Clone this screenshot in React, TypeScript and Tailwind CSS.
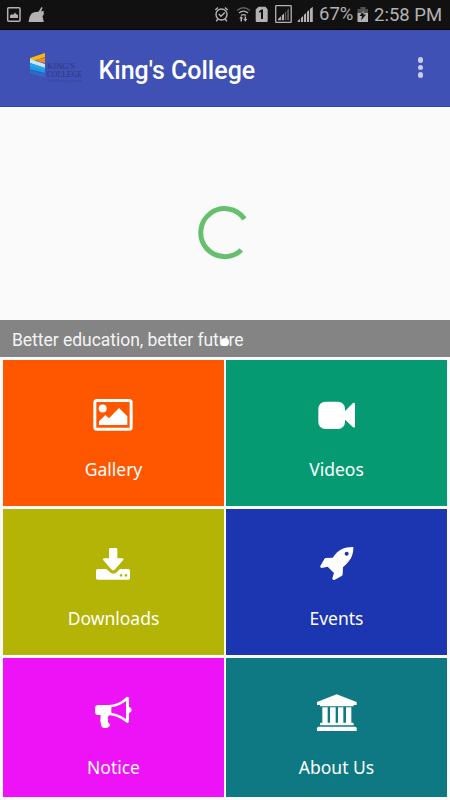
import React from 'react';

interface Tile {
  label: string;
  color: string;
  viewBox: string;
  icon: React.ReactNode;
}

const tiles: Tile[] = [
  {
    label: 'Gallery',
    color: 'bg-[#ff5600]',
    viewBox: '90 33 144 144',
    icon: (
      <>
        <rect x="104.5" y="61.5" width="109" height="86" rx="6" fill="none" stroke="currentColor" strokeWidth="9" />
        <circle cx="128" cy="85.500" r="12" />
        <path d="M117 135V124L136 105L147 115L177 84L202 109V135Z" />
      </>
    ),
  },
  {
    label: 'Videos',
    color: 'bg-[#069a72]',
    viewBox: '69 33 144 144',
    icon: (
      <>
        <rect x="85" y="65" width="80" height="82" rx="21" />
        <path d="M163 95L189 69Q195 66 195 72V139Q195 145 189 142L163 117Z" />
      </>
    ),
  },
  {
    label: 'Downloads',
    color: 'bg-[#b3b405]',
    viewBox: '90 30 144 144',
    icon: (
      <>
        <path d="M151 54H168Q172 54 172 58V85H187Q193 86 189 91L164 119Q160 123 155 119L130 91Q127 86 132 85H147V58Q147 54 151 54Z" />
        <path
          fillRule="evenodd"
          d="M113 117H139L152 128Q160 133 168 128L180 117H205Q210 117 210 122V144Q210 149 205 149H113Q108 149 108 144V122Q108 117 113 117ZM183 132a4 4 0 1 0 .01 0ZM198 132a4 4 0 1 0 .01 0Z"
        />
      </>
    ),
  },
  {
    label: 'Events',
    color: 'bg-[#1b36b0]',
    viewBox: '69 30 144 144',
    icon: (
      <path
        fillRule="evenodd"
        d="M188 51Q191 51 190 55C190 78 180 94 159 112L158 133Q158 136 155 138L133 150Q126 151 127 145L132 129L113 110L95 114Q89 113 91 108L103 87Q105 84 108 84L128 83C145 59 162 51 188 51ZM170 65a6 6 0 1 0 .01 0Z"
      />
    ),
  },
  {
    label: 'Notice',
    color: 'bg-[#ee12f6]',
    viewBox: '90 27 144 144',
    icon: (
      <path
        fillRule="evenodd"
        d="M115 75H145C166 74 183 66 197 53Q200 50 203 50Q207 51 207 55V81Q215 83 215 90Q215 97 207 99V124Q207 128 203 129Q200 129 197 126C182 114 165 107 148 106Q140 112 145 119Q140 124 151 134Q146 145 134 144Q126 144 124 138Q119 122 122 105H115Q105 105 105 95V85Q105 75 115 75ZM154 82V98Q178 102 198 117V63Q178 79 154 82Z"
      />
    ),
  },
  {
    label: 'About Us',
    color: 'bg-[#0f7983]',
    viewBox: '69 27 144 144',
    icon: (
      <>
        <path d="M140 43L200 66V75H191V79H90V75H81V66Z" />
        <path d="M97 82H113V128H120V82H137V128H144V82H160V128H168V82H184V128H188Q191 128 191 131V136H90V131Q90 128 93 128H97Z" />
        <path d="M86 140H195Q200 140 200 145V153H81V145Q81 140 86 140Z" />
      </>
    ),
  },
];

const StatusBar: React.FC = () => (
  <div className="flex h-[30px] shrink-0 items-center border-b border-black bg-[#111111] text-[#b2b2b2]">
    {/* Notifications */}
    <svg className="h-[30px] w-[60px] shrink-0" viewBox="0 0 60 30" fill="currentColor">
      <rect x="7.700" y="7.700" width="12.300" height="13.500" rx="1" fill="none" stroke="currentColor" strokeWidth="1.500" />
      <path d="M10 18V15.500L12 14L13 15L15 12.500L16 14L18 15V18Z" />
      <path d="M28.500 22Q28.700 17 31.500 13.500Q34 11.500 38.500 11.700L41.500 7L42.700 7.800L41 11.500L43.700 10.800V15L42.500 16L43.800 22Z" />
    </svg>
    {/* System icons */}
    <svg className="ml-[153px] h-[30px] w-[103px] shrink-0" viewBox="213 0 103 30" fill="currentColor">
      <g fill="none" stroke="currentColor" strokeWidth="1.400">
        <circle cx="221.500" cy="14.500" r="5.500" />
        <path d="M218.800 14L221 16.200L224.800 12.500M215.300 10L218 7.500M225 7.500L227.700 10M217.800 19L216.300 21.300M225.300 19L226.800 21.300" />
        <path d="M237 10.500Q243.500 5 250 10.500" opacity=".5" />
        <path d="M239 13Q243.500 9.300 248 13M241 15.500Q243.500 13.700 246 15.500" />
      </g>
      <path d="M239.200 18.500L241.200 16L243.200 18.500H242V21.500H240.500V18.500ZM243.300 19L245.300 21.700L247.300 19H246.100V16.500H244.600V19Z" />
      <path
        fillRule="evenodd"
        d="M258.500 6.700H265.500L267.700 9.500V21Q267.700 22 266.700 22H256.700Q255.700 22 255.700 21V9.500ZM259 11.200V12.800L261 12V19H263V9.500H261.500Z"
      />
      <rect x="275.700" y="5.700" width="15.500" height="16.700" rx=".6" fill="none" stroke="currentColor" strokeWidth="1.300" />
      <path d="M278 20.200V19L281 16.300V20.200ZM281.800 20.200V15.500L284 13.500V20.200Z" />
      <path d="M284.800 20.200V12.500L286.300 11V20.200ZM287.200 20.200V10L289 8.500V20.200Z" opacity=".45" />
      <path d="M297.700 22V21L300 18.800V22ZM300.900 22V18L303 16V22ZM303.900 22V15L306 13V22ZM306.900 22V12L309 10V22ZM309.900 22V9L312.800 6.700V22Z" />
    </svg>
    <span className="ml-[3px] w-[35px] whitespace-nowrap text-[18.500px] leading-[29px]">67%</span>
    <svg className="ml-[2px] h-[30px] w-[14px] shrink-0" viewBox="356 0 14 30" fill="currentColor">
      <path d="M360.500 7H365.500V9H368V13H357.500V9H360.500Z" opacity=".4" />
      <path fillRule="evenodd" d="M357.500 13H368V22H357.500ZM363.700 10.500L359.500 16H362L361 20.500L366 14.500H363.300Z" />
    </svg>
    <span className="ml-[4px] mt-px whitespace-nowrap text-[18.500px] leading-[29px]">2:58 PM</span>
  </div>
);

const CollegeLogo: React.FC = () => (
  <svg className="ml-[29px] h-[34px] w-[56px]" viewBox="29 52 56 34">
    <path d="M30 59L45 54V58L34 62L30 61Z" fill="#f7b713" />
    <path d="M36 61L45 58.500V64L40 63Z" fill="#f28b22" />
    <path d="M30 60L45 65V69L30 64Z" fill="#c5e9fb" />
    <path d="M30 64L45 69V72L30 68Z" fill="#25a5ec" />
    <path d="M30 67.500L45 71.500V74L30 70.500Z" fill="#159be7" />
    <path d="M30 71.500L45 75V78L30 74.500Z" fill="#2d6dc5" />
    <g fill="#2e377b" className="font-['Liberation_Serif',serif]">
      <text x="47" y="69.500" fontSize="7.300" textLength="28" lengthAdjust="spacingAndGlyphs">KING'S</text>
      <text x="47" y="77.500" fontSize="7.300" textLength="35" lengthAdjust="spacingAndGlyphs">COLLEGE</text>
      <text x="47.500" y="83" fontSize="3.500" textLength="34" fontStyle="italic" opacity=".6">architecting future</text>
    </g>
  </svg>
);

const Header: React.FC = () => (
  <div className="flex h-[77px] shrink-0 items-center border-b border-[#2846b0] bg-[#3f51b5]">
    <CollegeLogo />
    <h1 className="ml-[13.500px] mt-[5px] whitespace-nowrap text-[25px] font-medium leading-[30px] text-white">
      King's College
    </h1>
    <div className="mb-[1px] ml-auto mr-[27px] flex flex-col gap-[2px]">
      <span className="size-[5.500px] rounded-full bg-[#c8cce9]" />
      <span className="size-[5.500px] rounded-full bg-[#c8cce9]" />
      <span className="size-[5.500px] rounded-full bg-[#c8cce9]" />
    </div>
  </div>
);

export default function App() {
  return (
    <div className="flex h-[800px] w-[450px] flex-col overflow-hidden bg-[#fafafa] font-['Roboto',sans-serif]">
      <StatusBar />
      <Header />

      {/* Slider, still loading */}
      <div className="flex h-[213px] shrink-0 items-center justify-center pt-[38px]">
        <svg className="h-[54px] w-[54px]" viewBox="198 206 54 54">
          <path d="M244.500 219A24 24 0 1 0 241.300 250" fill="none" stroke="#66bf6c" strokeWidth="5" />
        </svg>
      </div>
      <div className="relative flex h-[37px] shrink-0 items-center bg-[#848484] pl-[12px]">
        <span className="mt-[2px] whitespace-nowrap text-[17.500px] leading-6 tracking-[-0.03px] text-[#f4f4f4]">
          Better education, better future
        </span>
        <span className="absolute left-[220.500px] top-[17.500px] size-[8px] rounded-full bg-white" />
      </div>

      {/* Menu */}
      <div className="grid grid-cols-2 grid-rows-[146px_146px_139px] gap-x-[2px] gap-y-[3px] px-[3px] pt-[3px]">
        {tiles.map((tile) => (
          <div key={tile.label} className={`flex flex-col items-center pt-[31px] text-white ${tile.color}`}>
            <svg className="size-12 shrink-0" viewBox={tile.viewBox} fill="currentColor">
              {tile.icon}
            </svg>
            <span className="mt-[17px] font-['Noto_Sans',sans-serif] text-[17.500px] leading-[26px]">{tile.label}</span>
          </div>
        ))}
      </div>
    </div>
  );
}
